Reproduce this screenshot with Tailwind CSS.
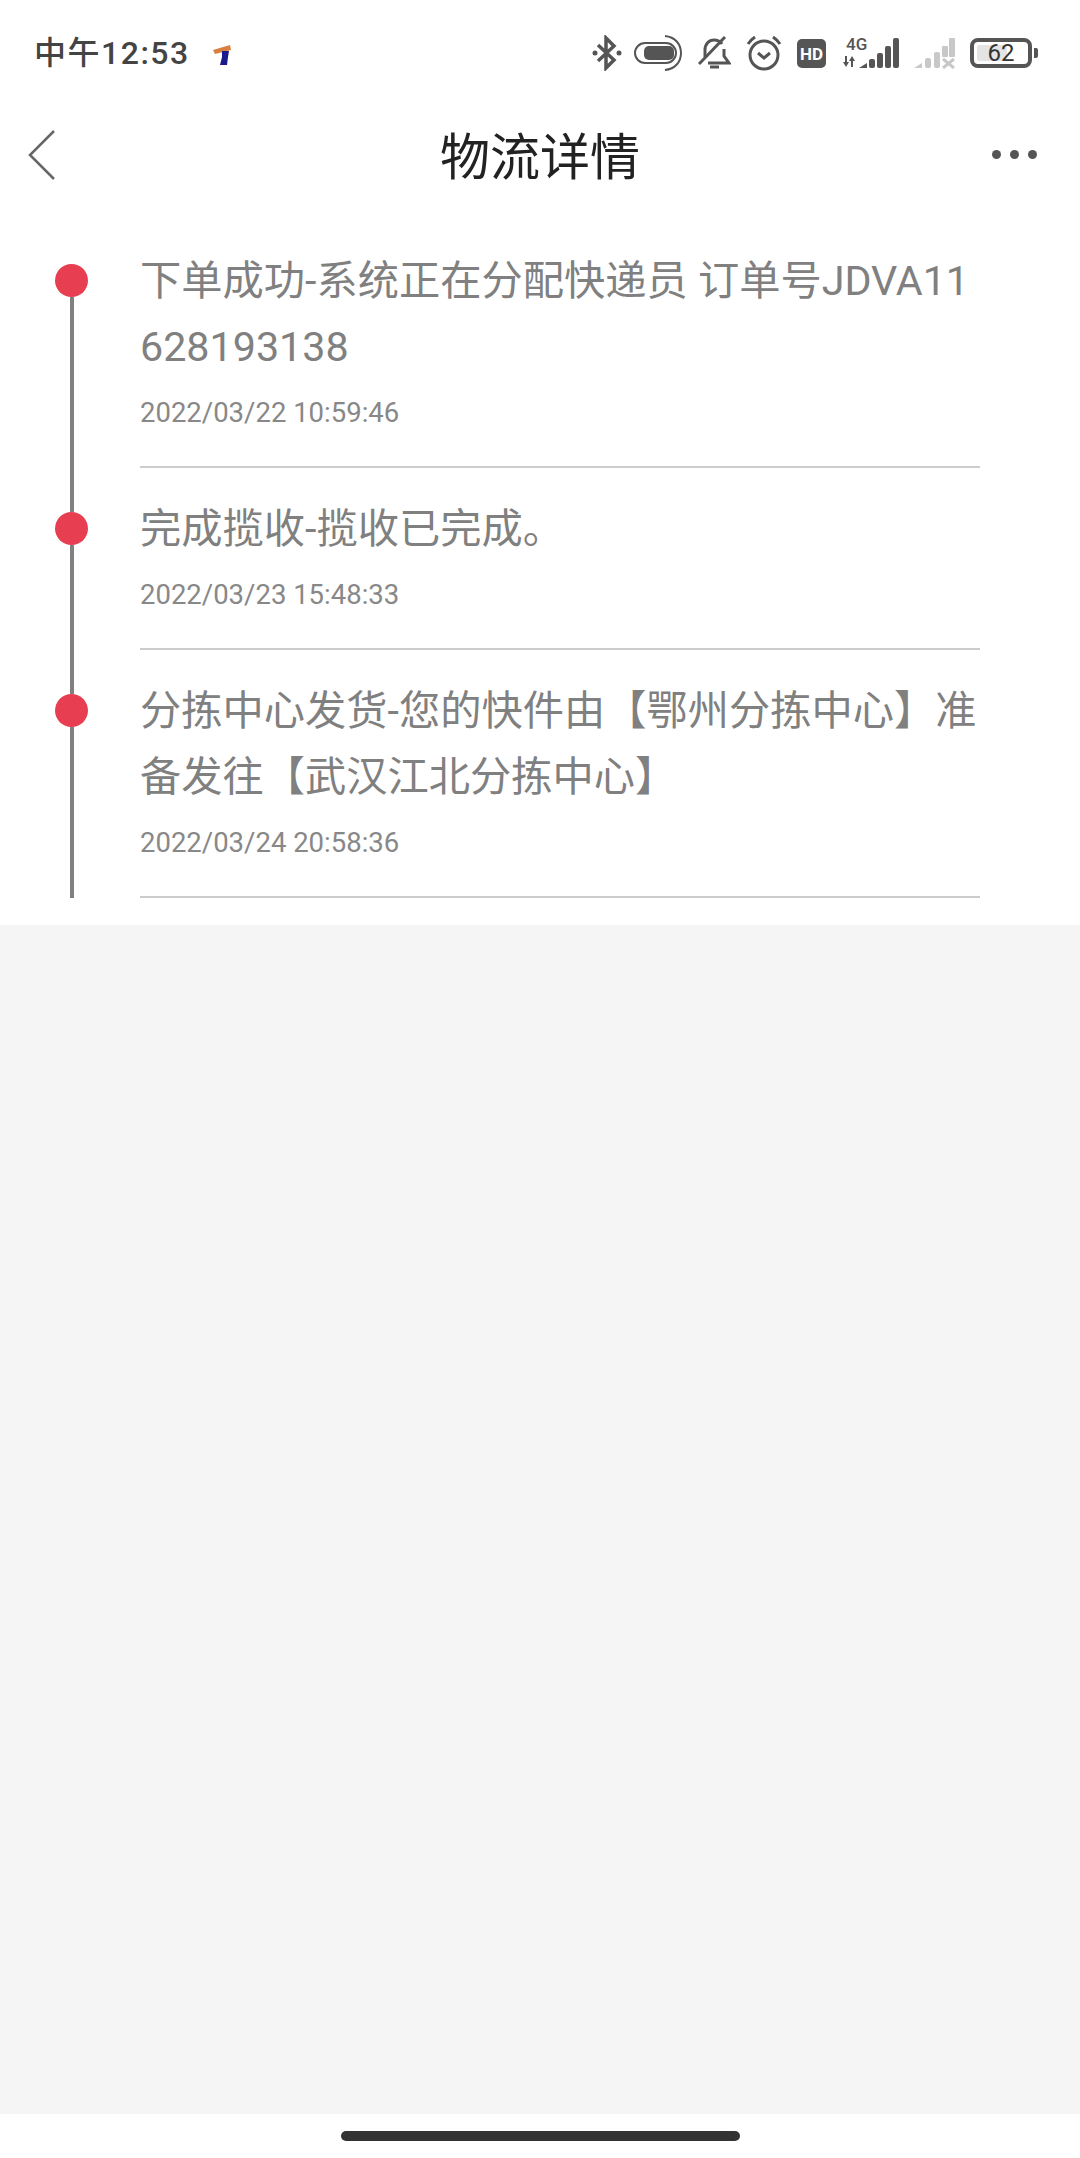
<!DOCTYPE html>
<html lang="zh-CN">
<head>
  <meta charset="UTF-8">
  <title>物流详情</title>
  <script src="https://cdn.jsdelivr.net/npm/@tailwindcss/browser@4"></script>
</head>
<body class="bg-white font-['Roboto','Noto_Sans_CJK_SC',sans-serif]">
  <div class="flex flex-col w-[1080px] h-[2158px]">

    <!-- status bar -->
    <div class="flex items-center h-[106px] pl-[34px] pr-[42px] text-[#444]">
      <span class="text-[32px] font-medium leading-none tracking-[1.5px]">中午12:53</span>
      <svg class="ml-[22px] mt-[4px] w-[20px] h-[22px]" viewBox="0 0 20 22">
        <path d="M1 6 L18 1 L19 6 L3 10 Z" fill="#d9803f"/>
        <path d="M10 7 L17 7 L16 13 L15 21 L8 21 L10 13 Z" fill="#1a1a8c"/>
      </svg>

      <div class="ml-auto flex items-center">
        <!-- bluetooth -->
        <svg class="w-[30px] h-[36px]" viewBox="0 0 30 36" fill="none" stroke="#555" stroke-width="3.5">
          <path d="M6 10 L22 25 L14 33 L14 3 L22 11 L6 26"/>
          <circle cx="3" cy="18" r="2.5" fill="#555" stroke="none"/>
          <circle cx="27" cy="18" r="2.5" fill="#555" stroke="none"/>
        </svg>
        <!-- pill -->
        <svg class="ml-[11px] w-[50px] h-[36px]" viewBox="0 0 50 36" fill="none">
          <rect x="2" y="8" width="41" height="20" rx="10" stroke="#555" stroke-width="2"/>
          <rect x="11" y="11" width="30" height="14" rx="5" fill="#555"/>
          <path d="M32 1 C42 2 48 9 48 18 C48 27 42 34 32 35" stroke="#555" stroke-width="2"/>
        </svg>
        <!-- muted bell -->
        <svg class="ml-[15px] w-[33px] h-[34px]" viewBox="0 0 33 34" fill="none" stroke="#555" stroke-width="3">
          <path d="M7 21 L7 14 C7 8 11 4 16 4 C19 4 22 5 24 8"/>
          <path d="M26 13 L26 20 L31 27 L10 27"/>
          <path d="M1 28 L27 1"/>
          <path d="M12 31 L21 31" stroke-width="3"/>
        </svg>
        <!-- alarm -->
        <svg class="ml-[15px] w-[36px] h-[36px]" viewBox="0 0 36 36" fill="none" stroke="#555" stroke-width="3">
          <circle cx="18" cy="20" r="14"/>
          <path d="M12 18 L18 23 L24 18"/>
          <path d="M2 9 C4 6 6 4 9 2 M34 9 C32 6 30 4 27 2"/>
        </svg>
        <!-- HD -->
        <svg class="ml-[15px] w-[29px] h-[29px]" viewBox="0 0 29 29">
          <rect width="29" height="29" rx="5" fill="#555"/>
          <text x="14.5" y="20.5" text-anchor="middle" font-family="Roboto" font-weight="700" font-size="17" fill="#fff">HD</text>
        </svg>
        <!-- 4G signal -->
        <svg class="ml-[16px] w-[58px] h-[33px] overflow-visible" viewBox="0 0 58 33">
          <text x="4" y="13" font-family="Roboto" font-weight="500" font-size="17" fill="#555">4G</text>
          <path d="M3 19 h2 v6 h2 l-3 5 l-3 -5 h2 Z M9 30 h2 v-6 h2 l-3 -5 l-3 5 h2 Z" fill="#555"/>
          <path d="M17 31 L25 31 L25 26 Z" fill="#555"/>
          <rect x="27" y="22" width="6" height="9" rx="2" fill="#555"/>
          <rect x="35" y="16" width="6" height="15" rx="2" fill="#555"/>
          <rect x="43" y="9" width="6" height="22" rx="2" fill="#555"/>
          <rect x="51" y="1" width="6" height="30" rx="2" fill="#555"/>
        </svg>
        <!-- second signal -->
        <svg class="ml-[14px] w-[41px] h-[31px]" viewBox="0 0 41 31">
          <path d="M0 30 L8 30 L8 25 Z" fill="#c8c8c8"/>
          <rect x="11" y="20" width="6" height="10" rx="2" fill="#c8c8c8"/>
          <rect x="20" y="14" width="6" height="16" rx="2" fill="#c8c8c8"/>
          <rect x="28" y="8" width="6" height="11" rx="1" fill="#c8c8c8"/>
          <rect x="35" y="0" width="6" height="19" rx="1" fill="#c8c8c8"/>
          <path d="M29 21 L40 30 M40 21 L29 30" stroke="#c8c8c8" stroke-width="3"/>
        </svg>
        <!-- battery -->
        <div class="ml-[15px] flex items-center">
          <div class="relative w-[62px] h-[30px] rounded-[8px] border-[4px] border-[#555] p-[3px]">
            <div class="w-[62%] h-full rounded-[2px] bg-[#e4e4e4]"></div>
            <span class="absolute inset-0 flex items-center justify-center text-[24px] leading-none text-[#333]">62</span>
          </div>
          <div class="ml-[2px] w-[4px] h-[10px] rounded-r-[2px] bg-[#555]"></div>
        </div>
      </div>
    </div>

    <!-- nav bar -->
    <div class="relative flex items-center justify-center h-[98px]">
      <svg class="absolute left-[27px] top-[22px] w-[30px] h-[54px]" viewBox="0 0 30 54" fill="none" stroke="#666" stroke-width="2.5">
        <path d="M27 3 L3 27 L27 51"/>
      </svg>
      <h1 class="mt-[6px] text-[50px] font-normal leading-none text-[#222]">物流详情</h1>
      <div class="absolute right-[43px] top-[44px] flex gap-[9px]">
        <span class="w-[9px] h-[9px] rounded-full bg-[#555]"></span>
        <span class="w-[9px] h-[9px] rounded-full bg-[#555]"></span>
        <span class="w-[9px] h-[9px] rounded-full bg-[#555]"></span>
      </div>
    </div>

    <!-- timeline -->
    <div class="pt-[16px] pb-[27px]">
      <div class="flex">
        <div class="ml-[55px] w-[33px] flex flex-col items-center">
          <div class="h-[44px]"></div>
          <div class="w-[33px] h-[33px] rounded-full bg-[#e83e52]"></div>
          <div class="w-[4px] flex-1 ml-[1px] bg-[#808080]"></div>
        </div>
        <div class="ml-[52px] w-[840px] pt-[28px] pb-[36px] border-b-2 border-[#ccc]">
          <p class="text-[41.25px] leading-[66px] text-[#808080] break-all">下单成功-系统正在分配快递员 订单号JDVA11628193138</p>
          <p class="mt-[16px] text-[27.5px] leading-[34px] text-[#888]">2022/03/22 10:59:46</p>
        </div>
      </div>
      <div class="flex">
        <div class="ml-[55px] w-[33px] flex flex-col items-center">
          <div class="w-[4px] h-[44px] ml-[1px] bg-[#808080]"></div>
          <div class="w-[33px] h-[33px] rounded-full bg-[#e83e52]"></div>
          <div class="w-[4px] flex-1 ml-[1px] bg-[#808080]"></div>
        </div>
        <div class="ml-[52px] w-[840px] pt-[28px] pb-[36px] border-b-2 border-[#ccc]">
          <p class="text-[41.25px] leading-[66px] text-[#808080] break-all">完成揽收-揽收已完成。</p>
          <p class="mt-[16px] text-[27.5px] leading-[34px] text-[#888]">2022/03/23 15:48:33</p>
        </div>
      </div>
      <div class="flex">
        <div class="ml-[55px] w-[33px] flex flex-col items-center">
          <div class="w-[4px] h-[44px] ml-[1px] bg-[#808080]"></div>
          <div class="w-[33px] h-[33px] rounded-full bg-[#e83e52]"></div>
          <div class="w-[4px] flex-1 ml-[1px] bg-[#808080]"></div>
        </div>
        <div class="ml-[52px] w-[840px] pt-[28px] pb-[36px] border-b-2 border-[#ccc]">
          <p class="text-[41.25px] leading-[66px] text-[#808080] break-all">分拣中心发货-您的快件由【鄂州分拣中心】准备发往【武汉江北分拣中心】</p>
          <p class="mt-[16px] text-[27.5px] leading-[34px] text-[#888]">2022/03/24 20:58:36</p>
        </div>
      </div>
    </div>

    <div class="flex-1 bg-[#f5f5f5]"></div>

    <!-- gesture bar -->
    <div class="h-[44px] pt-[17px] flex justify-center">
      <div class="w-[399px] h-[10px] rounded-full bg-[#333]"></div>
    </div>
  </div>
</body>
</html>
